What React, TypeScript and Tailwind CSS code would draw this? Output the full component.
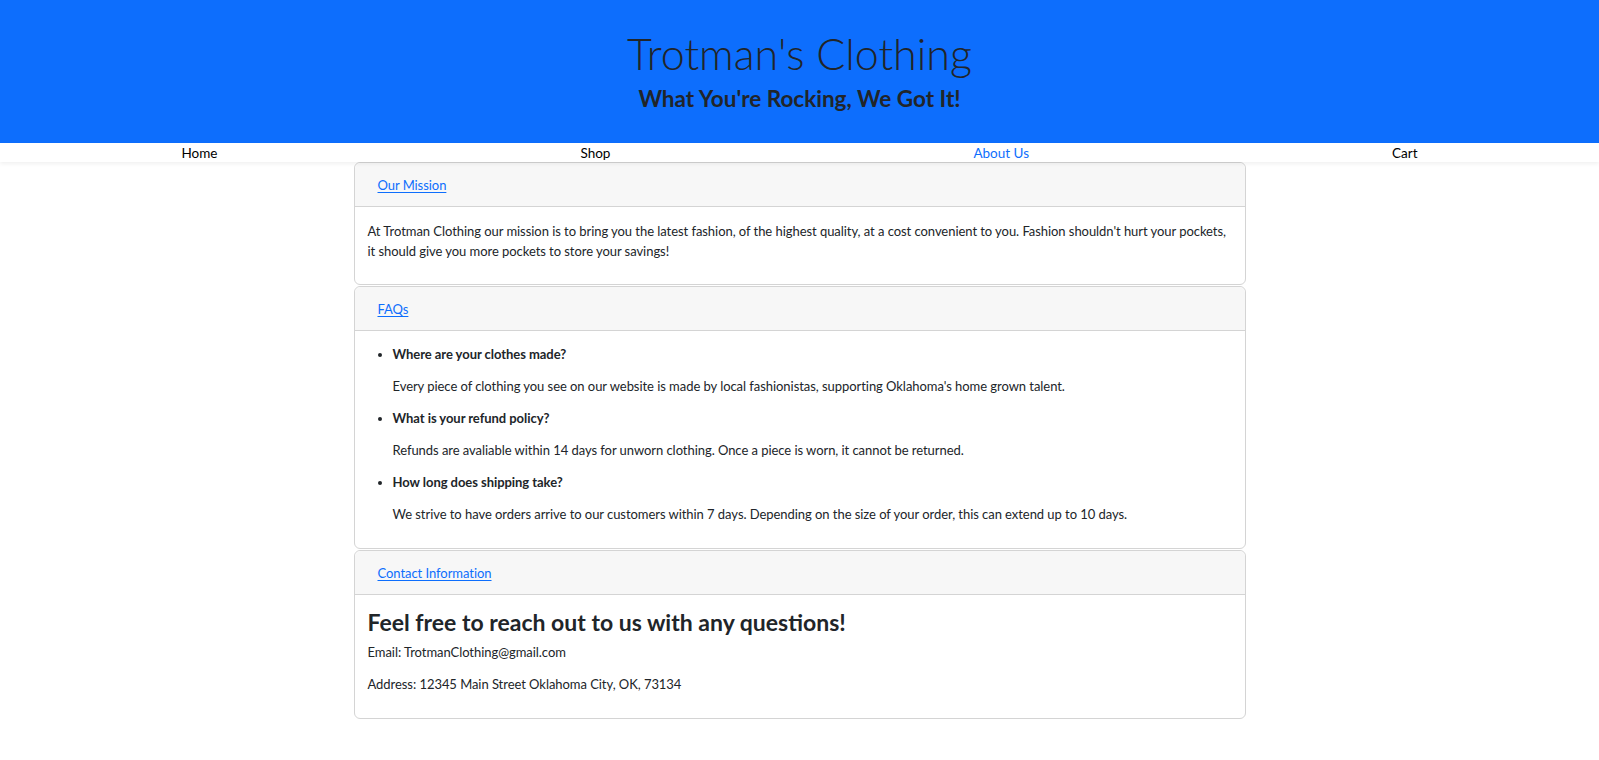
const faqs = [
  {
    q: "Where are your clothes made?",
    a: "Every piece of clothing you see on our website is made by local fashionistas, supporting Oklahoma's home grown talent.",
  },
  {
    q: "What is your refund policy?",
    a: "Refunds are avaliable within 14 days for unworn clothing. Once a piece is worn, it cannot be returned.",
  },
  {
    q: "How long does shipping take?",
    a: "We strive to have orders arrive to our customers within 7 days. Depending on the size of your order, this can extend up to 10 days.",
  },
];

const navItems = [
  { label: "Home", active: false },
  { label: "Shop", active: false },
  { label: "About Us", active: true },
  { label: "Cart", active: false },
];

const CardHeader = ({ title }: { title: string }) => (
  <div className="h-[44px] bg-[#f7f7f7] border-b border-[#d4d4d4] rounded-t-[6px] flex items-center px-[23px]">
    <a href="#" className="text-[#0d6efd] underline underline-offset-2">
      {title}
    </a>
  </div>
);

export default function App() {
  return (
    <div className="min-h-screen bg-white font-['Lato','Open_Sans',sans-serif] text-[13px] tracking-[-0.004em] leading-[20px] text-[#212529]">
      <header className="h-[143px] bg-[#0d6efd] flex flex-col items-center">
        <h1 className="mt-[26px] text-[43px] leading-[56px] font-light tracking-normal">
          Trotman's Clothing
        </h1>
        <h2 className="mt-[4px] text-[22.5px] leading-[26px] font-bold tracking-normal">
          What You're Rocking, We Got It!
        </h2>
      </header>

      <nav className="h-[19px] flex justify-around bg-white shadow-[0_2px_4px_rgba(0,0,0,0.06)] relative tracking-normal">
        {navItems.map((item) => (
          <div
            key={item.label}
            className={`pt-[1px] text-[13.5px] leading-[19px] ${
              item.active ? "text-[#0d6efd]" : "text-black"
            }`}
          >
            {item.label}
          </div>
        ))}
      </nav>

      <main className="w-[892px] mx-auto flex flex-col gap-[1px]">
        <section className="border border-[#d4d4d4] rounded-[6px]">
          <CardHeader title="Our Mission" />
          <div className="px-[13px] pt-[14px] pb-[23px]">
            <p>
              At Trotman Clothing our mission is to bring you the latest fashion, of
              the highest quality, at a cost convenient to you. Fashion shouldn't hurt
              your pockets, it should give you more pockets to store your savings!
            </p>
          </div>
        </section>

        <section className="border border-[#d4d4d4] rounded-[6px]">
          <CardHeader title="FAQs" />
          <div className="px-[13px] pt-[13px] pb-[24px]">
            <ul className="list-disc pl-[25px] flex flex-col gap-[12px]">
              {faqs.map((f) => (
                <li key={f.q}>
                  <span className="font-bold">{f.q}</span>
                  <p className="mt-[12px]">{f.a}</p>
                </li>
              ))}
            </ul>
          </div>
        </section>

        <section className="border border-[#d4d4d4] rounded-[6px]">
          <CardHeader title="Contact Information" />
          <div className="px-[13px] pt-[13px] pb-[24px]">
            <h3 className="text-[23px] leading-[28px] font-bold tracking-normal">
              Feel free to reach out to us with any questions!
            </h3>
            <p className="mt-[6px]">Email: TrotmanClothing@gmail.com</p>
            <p className="mt-[12px]">Address: 12345 Main Street Oklahoma City, OK, 73134</p>
          </div>
        </section>
      </main>
    </div>
  );
}
